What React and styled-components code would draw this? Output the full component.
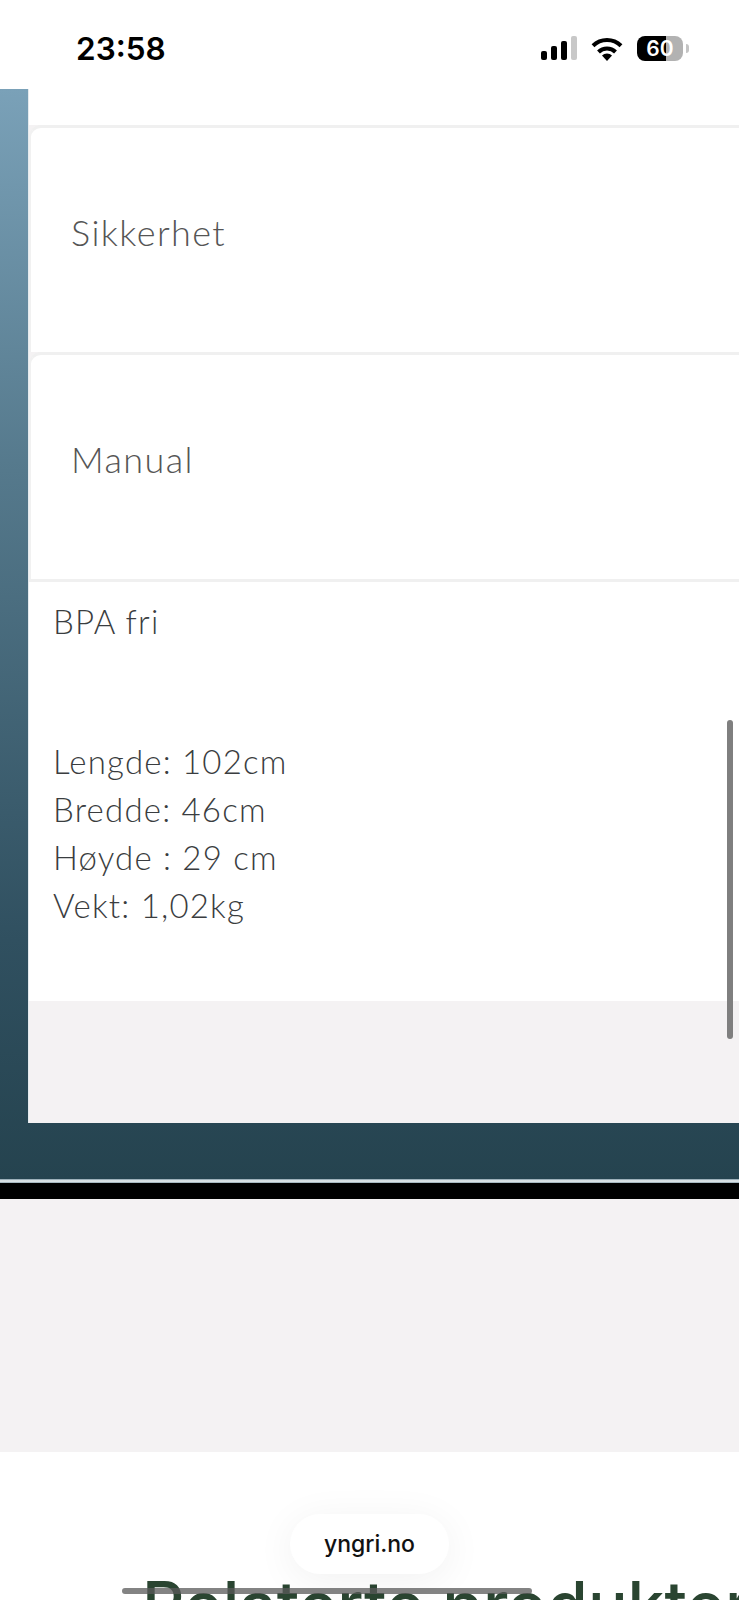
import React from 'react';
import styled, { createGlobalStyle } from 'styled-components';

const GlobalStyle = createGlobalStyle`
  html, body {
    margin: 0;
    padding: 0;
    background: #fff;
  }
`;

const Page = styled.div`
  position: relative;
  width: 739px;
  height: 1600px;
  overflow: hidden;
  background: #fff;
`;

const StatusBar = styled.div`
  height: 89px;
  display: flex;
  align-items: center;
  justify-content: space-between;
  padding: 8px 56px 0 76px;
  box-sizing: border-box;
  background: #fff;
`;

const Clock = styled.div`
  font-family: Inter, "Liberation Sans", sans-serif;
  font-size: 31.5px;
  font-weight: 600;
  color: #000;
`;

const StatusIcons = styled.div`
  display: flex;
  align-items: center;
  gap: 14px;
`;

const Battery = styled.div`
  position: relative;
  width: 46px;
  height: 25px;
  border-radius: 8px;
  background: linear-gradient(to right, #000 0 62%, #b2b2b2 62% 100%);
  color: #fff;
  font-family: Inter, "Liberation Sans", sans-serif;
  font-size: 21px;
  font-weight: 600;
  line-height: 25px;
  text-align: center;

  &::after {
    content: '';
    position: absolute;
    right: -6px;
    top: 8px;
    width: 3px;
    height: 9px;
    border-radius: 0 3px 3px 0;
    background: #c4c4c4;
  }
`;

const Showcase = styled.section`
  height: 1090px;
  padding: 0 0 56px 28px;
  box-sizing: border-box;
  background: linear-gradient(to bottom, #7aa1b8 0%, #55798c 35%, #305060 78%, #25434f 100%);
`;

const Panel = styled.div`
  height: 100%;
  display: flex;
  flex-direction: column;
  background: #f4f2f3;
  border-left: 1px solid #e4eaee;
`;

const PanelTop = styled.div`
  height: 36px;
  background: #fff;
`;

const Row = styled.div`
  height: 227px;
  display: flex;
  align-items: center;
  padding: 0 0 16px 40px;
  box-sizing: border-box;
  background: #fff;
  border-top: 3px solid #f0f0f0;
  border-top-left-radius: 12px;
  border-left: 2px solid #f1f1f1;
`;

const RowLabel = styled.span`
  font-family: Lato, "Liberation Sans", sans-serif;
  font-size: 36px;
  font-weight: 300;
  letter-spacing: 1.4px;
  color: #555;
`;

const Details = styled.div`
  height: 422px;
  padding: 15px 0 0 24px;
  box-sizing: border-box;
  background: #fff;
  border-top: 3px solid #f0f0f0;
`;

const DetailLine = styled.div`
  height: 48px;
  font-family: Lato, "Liberation Sans", sans-serif;
  font-size: 33px;
  font-weight: 300;
  line-height: 48px;
  letter-spacing: 1.2px;
  color: #3a3d40;
  margin-bottom: ${(p) => (p.$gap ? '92px' : '0')};
`;

const Rule = styled.div`
  height: 4px;
  background: linear-gradient(to bottom, #7f99a5, #f2f6f7 50%, #8ea4ae);
`;

const BlackBand = styled.div`
  height: 16px;
  background: #000;
`;

const GreySection = styled.div`
  height: 253px;
  background: #f4f2f3;
`;

const Related = styled.section`
  height: 148px;
  padding: 114px 0 0 142px;
  box-sizing: border-box;
  background: #fff;
`;

const RelatedTitle = styled.h2`
  margin: 0;
  font-family: Inter, "Liberation Sans", sans-serif;
  font-size: 66px;
  font-weight: 500;
  line-height: 78px;
  white-space: nowrap;
  color: #2a4531;
`;

const Scrollbar = styled.div`
  position: absolute;
  left: 727px;
  top: 720px;
  width: 6px;
  height: 319px;
  border-radius: 3px;
  background: #7f7f7f;
`;

const UrlPill = styled.div`
  position: absolute;
  left: 290px;
  top: 1514px;
  width: 159px;
  height: 60px;
  border-radius: 30px;
  display: flex;
  align-items: center;
  justify-content: center;
  background: #fff;
  box-shadow: 0 6px 40px rgba(0, 0, 0, 0.06);
  font-family: Inter, "Liberation Sans", sans-serif;
  font-size: 23px;
  font-weight: 500;
  color: #111;
`;

const HomeBar = styled.div`
  position: absolute;
  left: 122px;
  top: 1588px;
  width: 410px;
  height: 6px;
  border-radius: 3px;
  background: rgba(90, 90, 90, 0.75);
`;

const SignalIcon = () => (
  <svg width="36" height="25" viewBox="0 0 36 25">
    <rect x="0" y="15" width="6" height="9" rx="2" fill="#000" />
    <rect x="10" y="10" width="6" height="14" rx="2" fill="#000" />
    <rect x="20" y="5" width="6" height="19" rx="2" fill="#000" />
    <rect x="30" y="0" width="6" height="24" rx="2" fill="#c8c8c8" />
  </svg>
);

const WifiIcon = () => (
  <svg width="32" height="24" viewBox="0 0 32 24">
    <path d="M16 24l-5-5.5a7 7 0 0 1 10 0z" fill="#000" />
    <path d="M7.5 15a12 12 0 0 1 17 0" fill="none" stroke="#000" strokeWidth="4" />
    <path d="M2 8.8a20 20 0 0 1 28 0" fill="none" stroke="#000" strokeWidth="4" />
  </svg>
);

export default function App() {
  return (
    <Page>
      <GlobalStyle />
      <StatusBar>
        <Clock>23:58</Clock>
        <StatusIcons>
          <SignalIcon />
          <WifiIcon />
          <Battery>60</Battery>
        </StatusIcons>
      </StatusBar>
      <Showcase>
        <Panel>
          <PanelTop />
          <Row><RowLabel>Sikkerhet</RowLabel></Row>
          <Row><RowLabel>Manual</RowLabel></Row>
          <Details>
            <DetailLine $gap>BPA fri</DetailLine>
            <DetailLine>Lengde: 102cm</DetailLine>
            <DetailLine>Bredde: 46cm</DetailLine>
            <DetailLine>Høyde : 29 cm</DetailLine>
            <DetailLine>Vekt: 1,02kg</DetailLine>
          </Details>
        </Panel>
      </Showcase>
      <Rule />
      <BlackBand />
      <GreySection />
      <Related>
        <RelatedTitle>Relaterte produkter</RelatedTitle>
      </Related>
      <Scrollbar />
      <UrlPill>yngri.no</UrlPill>
      <HomeBar />
    </Page>
  );
}
